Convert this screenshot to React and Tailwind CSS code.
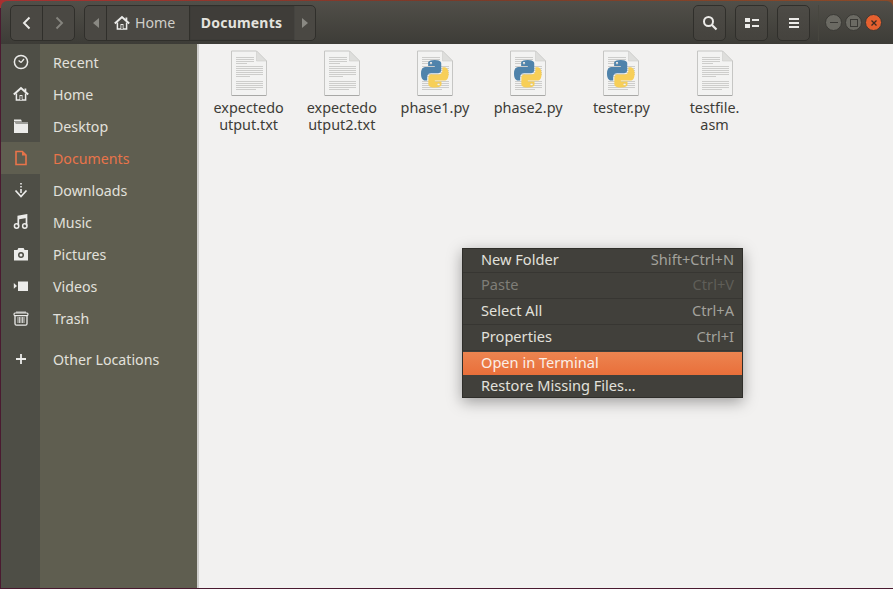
const FONT = { fontFamily: '"Noto Sans", "Open Sans", sans-serif' };

const I = ({ children, size = 16, vb = "0 0 16 16" }) => (
  <svg width={size} height={size} viewBox={vb} fill="none">{children}</svg>
);

const Clock = () => (
  <I><circle cx="8" cy="8" r="6.600" stroke="#ececea" strokeWidth="1.500" /><path d="M8 8.600 11 5M5.600 6.600 8 8.600" stroke="#ececea" strokeWidth="1.300" /></I>
);
const HomeIcon = ({ c = "#ececea" }) => (
  <I>
    <path d="M0.800 8.600 8 2l7.200 6.600" stroke={c} strokeWidth="2" />
    <path d="M11.500 2.500h1.800v3h-1.800Z" fill={c} />
    <path d="M3.400 7.500v6.500h9.200V7.500" stroke={c} strokeWidth="1.500" />
    <path d="M6.500 9h3v5h-3Z" fill={c} />
    <path d="M7.300 10h1.400v4H7.300Z" fill="#4c4b44" />
  </I>
);
const Folder = () => (
  <I><path d="M1 1.500h7l1 2H1Z" fill="#ececea" /><path d="M1 4h1.500v1.400H15V15H1Z" fill="#ececea" /><path d="M3 4h12v.5H3Z" fill="#ececea" /></I>
);
const Doc = () => (
  <I><path d="M3 1.500h6.300L13 5.200v9.300H3Z" stroke="#e9744a" strokeWidth="1.600" /><path d="M9 1.500v4h4Z" fill="#e9744a" /></I>
);
const Download = () => (
  <I><path d="M7.200 1h1.600v1.500H7.200ZM7.200 4h1.600v1.500H7.200ZM7.200 7h1.600v4H7.200Z" fill="#ececea" /><path d="M2.500 8.500 8 14.500l5.500-6" stroke="#ececea" strokeWidth="1.700" /></I>
);
const Music = () => (
  <I><path d="M5.300 11.500V2.500L13.500 1v10.500" stroke="#ececea" strokeWidth="1.700" /><circle cx="3.600" cy="12" r="2.200" stroke="#ececea" strokeWidth="1.500" /><circle cx="11.800" cy="12" r="2.200" stroke="#ececea" strokeWidth="1.500" /><path d="M5 2.500 13.500 1v3L5 5.500Z" fill="#ececea" /></I>
);
const Camera = () => (
  <I><path d="M1 4h3.400l1-2h5.200l1 2H15v10.500H1Z" fill="#ececea" /><circle cx="8" cy="9" r="3" fill="#4e4e46" /><circle cx="8" cy="9" r="1.500" fill="#ececea" /></I>
);
const Video = () => (
  <I><path d="M5 3.500h10v9.500H5Z" fill="#ececea" /><path d="M0.800 5v5.800L4 8Z" fill="#ececea" /></I>
);
const Trash = () => (
  <I><path d="M3 1.600h10v1H3Z" fill="#ececea" /><rect x="1" y="3" width="14" height="2.600" rx="1" stroke="#ececea" strokeWidth="1.100" /><path d="M2 5.500v8.200q0 1.500 1.500 1.500h9q1.500 0 1.500-1.500V5.500" stroke="#ececea" strokeWidth="1.300" /><path d="M5 7v6M8 7v6M11 7v6M6.500 7v6M9.500 7v6" stroke="#ececea" strokeWidth=".8" /></I>
);
const Plus = () => (
  <I><path d="M7.100 3h1.800v4.100H13v1.800H8.900V13H7.100V8.900H3V7.100h4.100Z" fill="#ececea" /></I>
);

const FileIcon = ({ python }) => (
  <svg width="38" height="47" viewBox="0 0 38 47" fill="none">
    <path d="M1.500 1h25L36.500 11V45.500H1.500Z" fill="#f3f3f2" stroke="#c6c6c4" />
    <path d="M2 45h34V46H2Z" fill="#a8a8a6" />
    <path d="M26.500 1v10H36.500Z" fill="#dededc" stroke="#cdcdcb" strokeWidth=".6" />
    <g stroke="#bcbcba" strokeWidth=".7">
      <path d="M6 7.500h18M6 9.500h18M6 11.500h18M6 13.500h11" />
      <path d="M6 16.500h27M6 18.500h27M6 20.500h27M6 22.500h27M6 24.500h27M6 26.500h14" />
      <path d="M6 31.500h27M6 33.500h27M6 35.500h27M6 37.500h27M6 39.500h20" />
    </g>
    {python && (
      <g transform="translate(5 10) scale(1.150)">
        <path d="M11.900 0C5.800 0 6.200 2.600 6.200 2.600v2.700h5.800v.8H3.900S0 5.700 0 11.900c0 6.100 3.400 5.900 3.400 5.900h2v-2.900s-.1-3.400 3.300-3.400h5.700s3.200.1 3.200-3.100V3.200S18.100 0 11.900 0zM8.700 1.800c.6 0 1 .5 1 1s-.4 1-1 1-1-.4-1-1 .4-1 1-1z" fill="#4f83ab" />
        <path d="M12.100 24c6.100 0 5.700-2.600 5.700-2.600v-2.700H12v-.8h8.100s3.900.4 3.900-5.800c0-6.100-3.400-5.900-3.400-5.900h-2v2.900s.1 3.400-3.300 3.400H9.600s-3.200-.1-3.200 3.100v5.200S5.900 24 12.100 24zm3.200-1.800c-.6 0-1-.5-1-1s.4-1 1-1 1 .4 1 1-.4 1-1 1z" fill="#f7cf58" />
      </g>
    )}
  </svg>
);

const places = [
  ["Recent", Clock], ["Home", HomeIcon], ["Desktop", Folder], ["Documents", Doc, true],
  ["Downloads", Download], ["Music", Music], ["Pictures", Camera], ["Videos", Video], ["Trash", Trash],
];

const Place = ({ label, Icon, active }) => (
  <div className="flex h-[32px] items-center">
    <div className={`flex h-full w-[39px] shrink-0 items-center justify-center ${active ? "" : "bg-[#4e4e46]"}`}>
      <Icon />
    </div>
    <span className={`pl-[13px] pt-[1px] text-[14.200px] ${active ? "text-[#e9744a]" : "text-[#e2e1dc]"}`}>{label}</span>
  </div>
);

const files = [
  [["expectedo", "utput.txt"]],
  [["expectedo", "utput2.txt"]],
  [["phase1.py"], true],
  [["phase2.py"], true],
  [["tester.py"], true],
  [["testfile.", "asm"]],
];

const menu = [
  ["New Folder", "Shift+Ctrl+N", false, "h-[24px] pb-[2px]"],
  ["Paste", "Ctrl+V", true, "h-[26px] pb-[1px]"],
  ["Select All", "Ctrl+A", false, "h-[26px] pb-[1px]"],
  ["Properties", "Ctrl+I", false, "h-[26px] pb-[1px]"],
];

const HBtn = ({ children }) => (
  <div className="flex h-[36px] w-[33px] items-center justify-center rounded-[5px] border border-[#302f2b] bg-gradient-to-b from-[#4d4b46] to-[#45433e]">
    {children}
  </div>
);

const Chev = ({ d, c }) => (
  <svg width="12" height="14" viewBox="0 0 12 14" fill="none"><path d={d} stroke={c} strokeWidth="1.900" /></svg>
);

const WinBtn = ({ bg, children }) => (
  <div className="flex h-[17px] w-[17px] items-center justify-center rounded-full border border-[#3a3935]" style={{ background: bg }}>
    {children}
  </div>
);

export default function App() {
  return (
    <div style={FONT} className="relative flex h-[589px] w-[893px] flex-col overflow-hidden bg-[#4a1a30] pb-[1px] pl-[1px]">
      <div className="absolute inset-x-0 top-0 h-[8px] bg-gradient-to-r from-[#a83030] via-[#7a3a28] to-[#8a4a28]" />
      <header className="relative mt-[1px] flex h-[43px] shrink-0 items-center rounded-t-[6px] bg-gradient-to-b from-[#514f49] to-[#3d3c37] pl-[9px]">
        <div className="flex h-[36px] w-[65px] rounded-[5px] border border-[#302f2b] bg-[#4a4843]">
          <div className="flex w-[32px] items-center justify-center border-r border-[#302f2b]">
            <Chev d="M8.500 1.500 3 7l5.500 5.500" c="#ecebe8" />
          </div>
          <div className="flex flex-1 items-center justify-center">
            <Chev d="M3.500 1.500 9 7l-5.500 5.500" c="#85847e" />
          </div>
        </div>
        <div className="ml-[9px] flex h-[36px] w-[232px] rounded-[5px] border border-[#302f2b] bg-[#4a4843]">
          <div className="flex w-[22px] items-center justify-center border-r border-[#302f2b]">
            <svg width="6" height="10" viewBox="0 0 6 10"><path d="M6 0v10L0 5Z" fill="#8a8983" /></svg>
          </div>
          <div className="flex w-[82px] items-center gap-[5px] pl-[7px]">
            <HomeIcon />
            <span className="text-[14.200px] text-[#cfcec9]">Home</span>
          </div>
          <div className="flex w-[105px] items-center justify-center bg-[#3f3d39] text-[14px] font-bold tracking-[0.2px] text-[#e4e3de] shadow-[inset_1px_0_1px_#302f2b]">
            Documents
          </div>
          <div className="flex flex-1 items-center justify-center border-l border-[#454440]">
            <svg width="6" height="10" viewBox="0 0 6 10"><path d="M0 0v10l6-5Z" fill="#8a8983" /></svg>
          </div>
        </div>
        <div className="ml-auto flex items-center">
          <div className="flex gap-[9px]">
            <HBtn>
              <svg width="16" height="16" viewBox="0 0 16 16" fill="none"><circle cx="6.500" cy="6.500" r="4.500" stroke="#ecebe8" strokeWidth="2" /><path d="m10 10 4.500 4.500" stroke="#ecebe8" strokeWidth="2.200" /></svg>
            </HBtn>
            <HBtn>
              <svg width="14" height="12" viewBox="0 0 14 12"><path d="M0 1h5v4H0ZM0 7h5v4H0ZM7 2h7v2H7ZM7 8h7v2H7Z" fill="#ecebe8" /></svg>
            </HBtn>
            <HBtn>
              <svg width="12" height="12" viewBox="0 0 12 12"><path d="M1 1h10v2H1ZM1 5h10v2H1ZM1 9h10v2H1Z" fill="#ecebe8" /></svg>
            </HBtn>
          </div>
          <div className="ml-[8px] h-[36px] w-px bg-[#47463f]" />
          <div className="ml-[6px] mr-[11px] flex gap-[3px]">
            <WinBtn bg="#6b6a63"><span className="h-[1.500px] w-[8px] bg-[#3a3935]" /></WinBtn>
            <WinBtn bg="#6b6a63"><span className="h-[8px] w-[8px] border border-[#3a3935]" /></WinBtn>
            <WinBtn bg="#e5602f">
              <svg width="8" height="8" viewBox="0 0 8 8"><path d="m1.500 1.500 5 5m0-5-5 5" stroke="#3f2a20" strokeWidth="1.300" /></svg>
            </WinBtn>
          </div>
        </div>
      </header>

      <div className="flex min-h-0 flex-1">
        <aside className="w-[196px] shrink-0 bg-[#5f5e50]">
          <div className="flex h-full flex-col">
            <div className="h-[2px] w-[39px] bg-[#4e4e46]" />
            {places.map(([label, Icon, active]) => (
              <Place key={label} label={label} Icon={Icon} active={active} />
            ))}
            <div className="h-[9px] w-[39px] bg-[#4e4e46]" />
            <Place label="Other Locations" Icon={Plus} />
            <div className="w-[39px] flex-1 bg-[#4e4e46]" />
          </div>
        </aside>
        <div className="w-[2px] shrink-0 bg-[#cfcecc]" />
        <main className="flex flex-1 items-start bg-[#f2f1f0] pl-[3px] pt-[6px]">
          {files.map(([lines, python], i) => (
            <div key={i} className="flex w-[93.200px] shrink-0 flex-col items-center">
              <FileIcon python={python} />
              <div className="mt-[2px] text-center text-[14.400px] leading-[17px] text-[#3d3c37]">
                {lines.map((l) => <div key={l}>{l}</div>)}
              </div>
            </div>
          ))}
        </main>
      </div>

      <div className="absolute left-[462px] top-[248px] w-[281px] border border-[#2f2e2a] bg-[#41403b] text-[14.600px] shadow-[0_4px_14px_rgba(0,0,0,0.35)]">
        {menu.map(([l, k, dis, h]) => (
          <div key={l} className={`flex ${h} items-center justify-between border-b border-[#373632] pl-[18px] pr-[8px]`}>
            <span className={dis ? "text-[#7f7e78]" : "text-[#e2e1dc]"}>{l}</span>
            <span className={dis ? "text-[#5f5e58]" : "text-[#a3a29c]"}>{k}</span>
          </div>
        ))}
        <div className="mt-[1px] flex h-[23px] items-center bg-gradient-to-b from-[#ec8450] to-[#e96f3a] pb-[1px] pl-[18px] text-[#fbeee6]">Open in Terminal</div>
        <div className="flex h-[22px] items-center pb-[1px] pl-[18px] text-[#e2e1dc]">Restore Missing Files…</div>
      </div>
    </div>
  );
}
